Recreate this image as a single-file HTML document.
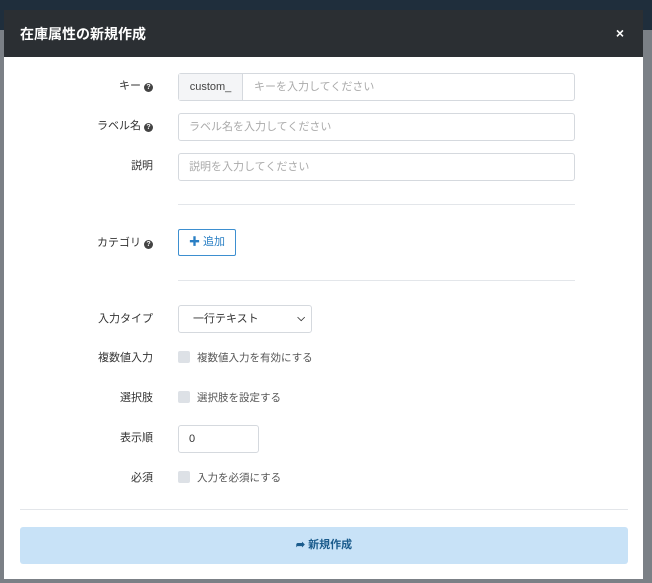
<html><head><style>
body{margin:0;width:652px;height:583px;background:#7b8086;position:relative;overflow:hidden;font-family:"Liberation Sans","Noto Sans CJK JP",sans-serif;}
.top{position:absolute;left:0;top:0;width:652px;height:30px;background:#1f2e3c;}
.modal{position:absolute;left:4px;top:10px;width:639px;height:569px;background:#fff;}
.hd{position:absolute;left:0;top:0;width:639px;height:47px;background:#2b2f33;color:#fff;}
.hd .t{position:absolute;left:16px;top:14px;font-size:14px;font-weight:bold;}
.hd .x{position:absolute;right:19px;top:15px;font-size:14px;font-weight:bold;}
.a{position:absolute;}
.lab{position:absolute;right:490px;font-size:11px;color:#333;text-align:right;}
.q{display:inline-block;width:9px;height:9px;border-radius:50%;background:#444;color:#fff;font-size:7px;line-height:9px;text-align:center;font-weight:bold;vertical-align:0px;margin-left:3px;}
.inp{position:absolute;left:174px;width:395px;height:26px;border:1px solid #d5d9de;border-radius:3px;font-size:11px;color:#aaa;line-height:26px;box-sizing:content-box;}
.cb{position:absolute;left:174px;width:12px;height:12px;background:#dde1e6;border-radius:2px;}
.ct{position:absolute;left:193px;font-size:10.5px;color:#555;}
.hr{position:absolute;height:1px;background:#e3e6ea;}
</style></head><body>
<div class="top"></div>
<div class="modal">
<div class="hd"><div class="t">在庫属性の新規作成</div><div class="x">×</div></div>
<div class="lab" style="top:67px">キー<span class="q">?</span></div>
<div class="inp" style="top:63px;"><span style="display:inline-block;width:63px;background:#f4f5f7;border-right:1px solid #d5d9de;color:#444;text-align:center;height:26px;">custom_</span><span style="margin-left:11px">キーを入力してください</span></div>
<div class="lab" style="top:107px">ラベル名<span class="q">?</span></div>
<div class="inp" style="top:103px;"><span style="margin-left:10px">ラベル名を入力してください</span></div>
<div class="lab" style="top:147px">説明</div>
<div class="inp" style="top:143px;"><span style="margin-left:10px">説明を入力してください</span></div>
<div class="hr" style="left:174px;top:194px;width:397px"></div>
<div class="lab" style="top:224px">カテゴリ<span class="q">?</span></div>
<div class="a" style="left:174px;top:219px;width:56px;height:25px;border:1px solid #3d8fd0;border-radius:2px;color:#2a7fc4;font-size:11px;line-height:25px;text-align:center;"><b>✚</b> 追加</div>
<div class="hr" style="left:174px;top:270px;width:397px"></div>
<div class="lab" style="top:300px">入力タイプ</div>
<div class="inp" style="top:295px;width:132px;color:#333;"><span style="margin-left:14px">一行テキスト</span><span style="position:absolute;right:6px;font-size:10px;font-weight:bold">⌵</span></div>
<div class="lab" style="top:339px">複数値入力</div>
<div class="cb" style="top:341px"></div><div class="ct" style="top:340px">複数値入力を有効にする</div>
<div class="lab" style="top:379px">選択肢</div>
<div class="cb" style="top:381px"></div><div class="ct" style="top:380px">選択肢を設定する</div>
<div class="lab" style="top:419px">表示順</div>
<div class="inp" style="top:415px;width:79px;color:#333;"><span style="margin-left:10px">0</span></div>
<div class="lab" style="top:459px">必須</div>
<div class="cb" style="top:461px"></div><div class="ct" style="top:460px">入力を必須にする</div>
<div class="hr" style="left:16px;top:499px;width:608px"></div>
<div class="a" style="left:16px;top:517px;width:608px;height:37px;background:#c8e2f7;border-radius:3px;color:#1a5b8c;font-size:11px;font-weight:bold;line-height:37px;text-align:center;">➦ 新規作成</div>
</div>
</body></html>
